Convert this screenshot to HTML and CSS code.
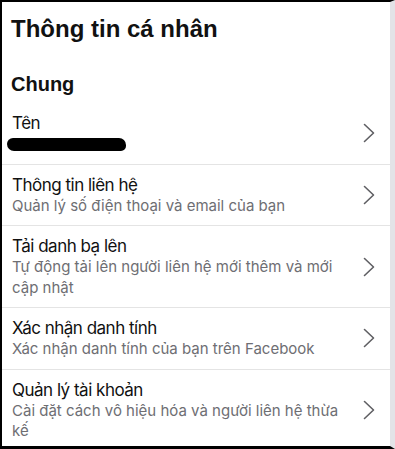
FILE: index.html
```html
<!DOCTYPE html>
<html lang="vi">
<head>
<meta charset="utf-8">
<title>Thông tin cá nhân</title>
<link rel="stylesheet" href="styles.css">
</head>
<body>
<div class="frame">
  <h1 class="page-title">Thông tin cá nhân</h1>
  <h2 class="section-title">Chung</h2>
  <ul class="list">
    <li class="row row-first">
      <div class="row-text">
        <div class="row-title">Tên</div>
        <div class="row-sub"><span class="redacted"></span></div>
      </div>
      <svg class="chev" viewBox="0 0 12 20" aria-hidden="true"><path d="M1.5 1.5 L10.5 10 L1.5 18.5"/></svg>
    </li>
    <li class="row">
      <div class="row-text">
        <div class="row-title">Thông tin liên hệ</div>
        <div class="row-sub">Quản lý số điện thoại và email của bạn</div>
      </div>
      <svg class="chev" viewBox="0 0 12 20" aria-hidden="true"><path d="M1.5 1.5 L10.5 10 L1.5 18.5"/></svg>
    </li>
    <li class="row">
      <div class="row-text">
        <div class="row-title">Tải danh bạ lên</div>
        <div class="row-sub">Tự động tải lên người liên hệ mới thêm và mới cập nhật</div>
      </div>
      <svg class="chev" viewBox="0 0 12 20" aria-hidden="true"><path d="M1.5 1.5 L10.5 10 L1.5 18.5"/></svg>
    </li>
    <li class="row">
      <div class="row-text">
        <div class="row-title">Xác nhận danh tính</div>
        <div class="row-sub">Xác nhận danh tính của bạn trên Facebook</div>
      </div>
      <svg class="chev" viewBox="0 0 12 20" aria-hidden="true"><path d="M1.5 1.5 L10.5 10 L1.5 18.5"/></svg>
    </li>
    <li class="row">
      <div class="row-text">
        <div class="row-title">Quản lý tài khoản</div>
        <div class="row-sub">Cài đặt cách vô hiệu hóa và người liên hệ thừa kế</div>
      </div>
      <svg class="chev" viewBox="0 0 12 20" aria-hidden="true"><path d="M1.5 1.5 L10.5 10 L1.5 18.5"/></svg>
    </li>
  </ul>
</div>
</body>
</html>
```
FILE: styles.css
```css
* { box-sizing: border-box; }
html, body { margin: 0; padding: 0; background: #000; }
body { font-family: Inter, "Liberation Sans", Arial, sans-serif; color: #111; }
.frame {
  width: 395px;
  height: 449px;
  overflow: hidden;
  background: #fff;
  border-top: 2px solid #000;
  border-left: 2px solid #000;
  border-bottom: 3px solid #000;
  border-right: 5px solid #e3e3e7;
}
.page-title {
  margin: 12px 0 0 9px;
  font-family: "Liberation Sans", Arial, sans-serif;
  font-size: 24px;
  line-height: 30px;
  font-weight: 700;
  color: #111;
}
.section-title {
  margin: 28px 0 0 9px;
  font-family: "Liberation Sans", Arial, sans-serif;
  font-size: 20px;
  line-height: 24px;
  font-weight: 700;
  color: #111;
}
.list { list-style: none; margin: 7px 0 0; padding: 0; }
.row {
  display: flex;
  align-items: center;
  border-top: 1px solid #e4e4e4;
  padding: 9px 15px 9px 10px;
}
.row-first { border-top: 0; }
.row-text { flex: 1; min-width: 0; padding-right: 14px; }
.row-title { font-size: 17px; line-height: 22px; letter-spacing: -0.5px; color: #111; }
.row-sub { font-size: 15px; line-height: 20.5px; color: #6e6e73; }
.redacted {
  display: inline-block;
  vertical-align: middle;
  width: 119px;
  height: 13px;
  margin-left: -5px;
  background: #000;
  border-radius: 6px 7px 5px 7px;
}
.chev { width: 12px; height: 20px; flex: none; fill: none; stroke: #5f5f63; stroke-width: 1.6; stroke-linecap: round; stroke-linejoin: round; }
```
